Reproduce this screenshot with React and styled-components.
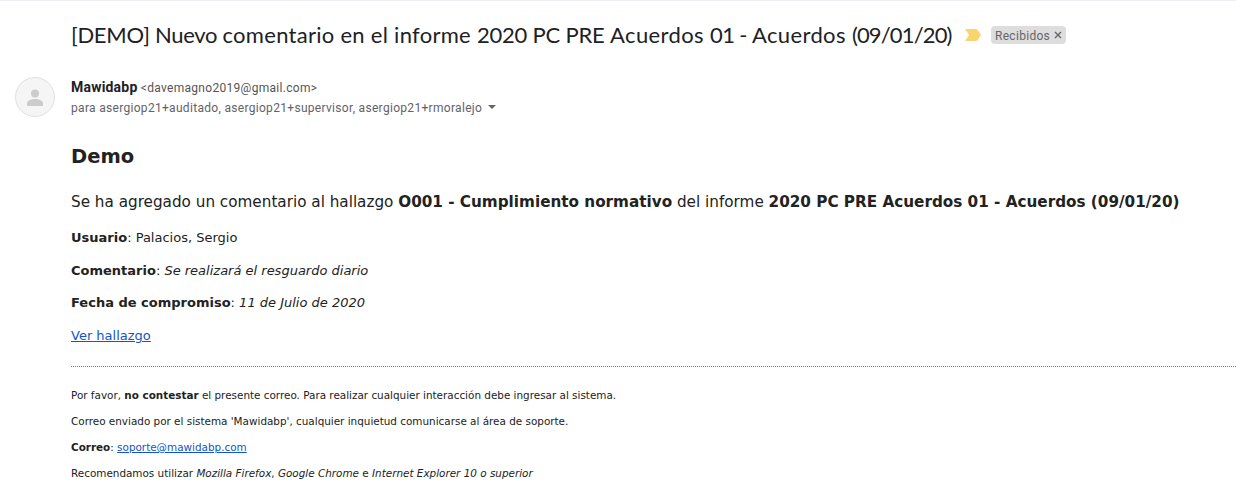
import React from "react";
import styled, { createGlobalStyle } from "styled-components";

const Global = createGlobalStyle`
  * { box-sizing: border-box; }
  body { margin: 0; background: #fff; color: #222; font-family: Roboto, sans-serif; overflow: hidden; }
`;
const Page = styled.main`
  height: 489px;
  overflow: hidden;
  border-top: 1px solid #eceff1;
  padding-left: 71px;
`;
const SubjectRow = styled.header`
  display: flex;
  align-items: center;
  height: 36px;
  margin-top: 16px;
`;
const Subject = styled.h1`
  margin: 0;
  width: 882px;
  font: 400 22px/28px Lato, sans-serif;
  white-space: pre;
  color: #202124;
`;
const Run = styled.span`
  letter-spacing: ${(p) => p.$track}px;
`;
const Marker = styled.svg`
  width: 16px;
  height: 12px;
  margin-left: 12px;
`;
const Label = styled.span`
  display: flex;
  align-items: center;
  margin-left: 10px;
  height: 18px;
  width: 75px;
  padding: 1px 0 0 4px;
  border-radius: 4px;
  background: #ddd;
  color: #666;
  font-size: 12px;
  letter-spacing: 0.3px;
`;
const Close = styled.svg`
  width: 8px;
  height: 8px;
  margin: -1px 0 0 4px;
`;
const SenderRow = styled.section`
  display: flex;
  margin: 24px 0 0 -56px;
  height: 40px;
`;
const Avatar = styled.svg`
  width: 40px;
  height: 40px;
  margin-right: 16px;
`;
const SenderLine = styled.div`
  height: 20px;
  font-size: 12px;
  line-height: 20px;
  letter-spacing: 0.3px;
  color: #555;
  white-space: nowrap;
`;
const Recipients = styled(SenderLine)`
  margin-top: 1px;
  letter-spacing: 0.308px;
  color: #5f6368;
`;
const SenderName = styled.strong`
  font-size: 14px;
  letter-spacing: 0.2px;
  color: #202124;
`;
const Caret = styled.svg`
  width: 8px;
  height: 4px;
  margin-left: 6px;
  vertical-align: 3px;
`;
const Body = styled.article`
  font-family: "DejaVu Sans", sans-serif;
  white-space: nowrap;
`;
const Heading = styled.h2`
  margin: 28px 0 0;
  font-size: 19.5px;
  line-height: 24px;
`;
const Line = styled.p`
  margin: ${(p) => p.$top}px 0 0;
  font-size: ${(p) => p.$size}px;
  line-height: 20px;
`;
const Link = styled.a`
  color: #15c;
  text-decoration: underline;
`;
const Divider = styled.hr`
  margin: 20px 0 0;
  border: 0;
  border-top: 1px dotted #777;
`;

export default function App() {
  return (
    <Page>
      <Global />
      <SubjectRow>
        <Subject>
          <Run $track={-0.3}>{"[DEMO] Nuevo "}</Run>
          <Run $track={0.28}>{"comentario en el informe "}</Run>
          <Run $track={-0.2}>{"2020 PC PRE "}</Run>
          <Run $track={0.38}>{"Acuerdos "}</Run>
          <Run $track={-0.6}>{"01 - "}</Run>
          <Run $track={0.38}>{"Acuerdos "}</Run>
          <Run $track={-0.85}>(09/01/20)</Run>
        </Subject>
        <Marker viewBox="0 0 16 12"><path d="M0 0h11q1 0 1.500.7L16 6l-3.500 5.300Q12 12 11 12H0l4-6z" fill="#f8d56f" /></Marker>
        <Label>Recibidos<Close viewBox="0 0 8 8"><path d="M1 1l6 6M7 1L1 7" stroke="#666" strokeWidth="1.4" /></Close></Label>
      </SubjectRow>
      <SenderRow>
        <Avatar viewBox="0 0 40 40">
          <circle cx="20" cy="20" r="19.500" fill="#f5f5f5" stroke="#e0e0e0" />
          <circle cx="20" cy="16.500" r="4" fill="#ccc" />
          <path d="M12 29v-2.500c0-3 4-4.500 8-4.500s8 1.500 8 4.500V29z" fill="#ccc" />
        </Avatar>
        <div>
          <SenderLine><SenderName>Mawidabp</SenderName> &lt;davemagno2019@gmail.com&gt;</SenderLine>
          <Recipients>para asergiop21+auditado, asergiop21+supervisor, asergiop21+rmoralejo<Caret viewBox="0 0 8 4"><path d="M0 0h8L4 4z" fill="#666" /></Caret></Recipients>
        </div>
      </SenderRow>
      <Body>
        <Heading>Demo</Heading>
        <Line $top={23} $size={15.23}>Se ha agregado un comentario al hallazgo <b>O001 - Cumplimiento normativo</b> del informe <b>2020 PC PRE Acuerdos 01 - Acuerdos (09/01/20)</b></Line>
        <Line $top={16} $size={13}><b>Usuario</b>: Palacios, Sergio</Line>
        <Line $top={13} $size={13}><b>Comentario</b>: <i>Se realizará el resguardo diario</i></Line>
        <Line $top={12} $size={13}><b>Fecha de compromiso</b>: <i>11 de Julio de 2020</i></Line>
        <Line $top={13} $size={13}><Link>Ver hallazgo</Link></Line>
        <Divider />
        <Line $top={18} $size={10.415}>Por favor, <b>no contestar</b> el presente correo. Para realizar cualquier interacción debe ingresar al sistema.</Line>
        <Line $top={6} $size={10.415}>Correo enviado por el sistema 'Mawidabp', cualquier inquietud comunicarse al área de soporte.</Line>
        <Line $top={6} $size={10.415}><b>Correo</b>: <Link>soporte@mawidabp.com</Link></Line>
        <Line $top={6} $size={10.415}>Recomendamos utilizar <i>Mozilla Firefox</i>, <i>Google Chrome</i> e <i>Internet Explorer 10 o superior</i></Line>
      </Body>
    </Page>
  );
}
